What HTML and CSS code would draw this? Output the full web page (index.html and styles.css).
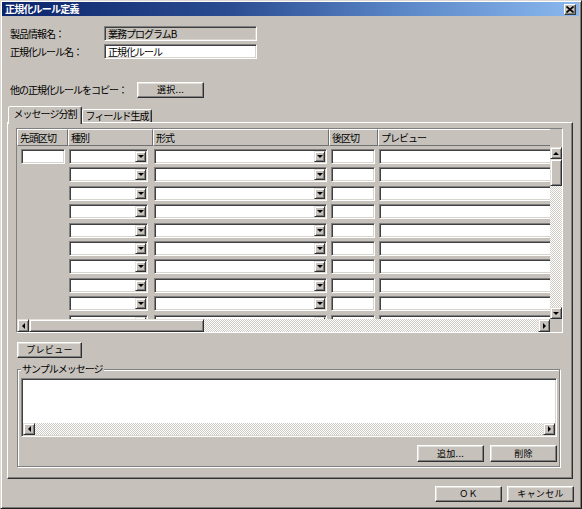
FILE: index.html
```html
<!DOCTYPE html>
<html lang="ja">
<head>
<meta charset="utf-8">
<title>正規化ルール定義</title>
<link rel="stylesheet" href="styles.css">
</head>
<body>
<div class="window">
  <div class="titlebar">
    <span class="title">正規化ルール定義</span>
    <span class="close-btn"><svg width="8" height="7" viewBox="0 0 8 7"><path d="M0.5 0.5 L7.5 6.5 M7.5 0.5 L0.5 6.5" stroke="#000" stroke-width="1.6" fill="none"/></svg></span>
  </div>

  <div class="form">
    <div class="field-row">
      <span class="label">製品情報名：</span>
      <div class="textbox readonly">業務プログラムB</div>
    </div>
    <div class="field-row row-gap">
      <span class="label">正規化ルール名：</span>
      <div class="textbox">正規化ルール</div>
    </div>
    <div class="copy-row">
      <span class="label copy-label">他の正規化ルールをコピー：</span>
      <div class="button btn-select">選択...</div>
    </div>
  </div>

  <div class="tabs">
    <div class="tab active">メッセージ分割</div>
    <div class="tab">フィールド生成</div>
  </div>

  <div class="panel">
    <div class="grid-table">
      <div class="grid-content">
        <div class="grid-header">
          <div class="hcell">先頭区切</div>
          <div class="hcell">種別</div>
          <div class="hcell">形式</div>
          <div class="hcell">後区切</div>
          <div class="hcell">プレビュー</div>
        </div>
        <div class="grid-body">
          <div class="grow">
            <div class="cell"><div class="input c1"></div></div>
            <div class="cell"><div class="combo c2"><span class="drop"><i class="arr-down"></i></span></div></div>
            <div class="cell"><div class="combo c3"><span class="drop"><i class="arr-down"></i></span></div></div>
            <div class="cell"><div class="input c4"></div></div>
            <div class="cell"><div class="input c5"></div></div>
          </div>
          <div class="grow">
            <div class="cell"></div>
            <div class="cell"><div class="combo c2"><span class="drop"><i class="arr-down"></i></span></div></div>
            <div class="cell"><div class="combo c3"><span class="drop"><i class="arr-down"></i></span></div></div>
            <div class="cell"><div class="input c4"></div></div>
            <div class="cell"><div class="input c5"></div></div>
          </div>
          <div class="grow">
            <div class="cell"></div>
            <div class="cell"><div class="combo c2"><span class="drop"><i class="arr-down"></i></span></div></div>
            <div class="cell"><div class="combo c3"><span class="drop"><i class="arr-down"></i></span></div></div>
            <div class="cell"><div class="input c4"></div></div>
            <div class="cell"><div class="input c5"></div></div>
          </div>
          <div class="grow">
            <div class="cell"></div>
            <div class="cell"><div class="combo c2"><span class="drop"><i class="arr-down"></i></span></div></div>
            <div class="cell"><div class="combo c3"><span class="drop"><i class="arr-down"></i></span></div></div>
            <div class="cell"><div class="input c4"></div></div>
            <div class="cell"><div class="input c5"></div></div>
          </div>
          <div class="grow">
            <div class="cell"></div>
            <div class="cell"><div class="combo c2"><span class="drop"><i class="arr-down"></i></span></div></div>
            <div class="cell"><div class="combo c3"><span class="drop"><i class="arr-down"></i></span></div></div>
            <div class="cell"><div class="input c4"></div></div>
            <div class="cell"><div class="input c5"></div></div>
          </div>
          <div class="grow">
            <div class="cell"></div>
            <div class="cell"><div class="combo c2"><span class="drop"><i class="arr-down"></i></span></div></div>
            <div class="cell"><div class="combo c3"><span class="drop"><i class="arr-down"></i></span></div></div>
            <div class="cell"><div class="input c4"></div></div>
            <div class="cell"><div class="input c5"></div></div>
          </div>
          <div class="grow">
            <div class="cell"></div>
            <div class="cell"><div class="combo c2"><span class="drop"><i class="arr-down"></i></span></div></div>
            <div class="cell"><div class="combo c3"><span class="drop"><i class="arr-down"></i></span></div></div>
            <div class="cell"><div class="input c4"></div></div>
            <div class="cell"><div class="input c5"></div></div>
          </div>
          <div class="grow">
            <div class="cell"></div>
            <div class="cell"><div class="combo c2"><span class="drop"><i class="arr-down"></i></span></div></div>
            <div class="cell"><div class="combo c3"><span class="drop"><i class="arr-down"></i></span></div></div>
            <div class="cell"><div class="input c4"></div></div>
            <div class="cell"><div class="input c5"></div></div>
          </div>
          <div class="grow">
            <div class="cell"></div>
            <div class="cell"><div class="combo c2"><span class="drop"><i class="arr-down"></i></span></div></div>
            <div class="cell"><div class="combo c3"><span class="drop"><i class="arr-down"></i></span></div></div>
            <div class="cell"><div class="input c4"></div></div>
            <div class="cell"><div class="input c5"></div></div>
          </div>
          <div class="grow">
            <div class="cell"></div>
            <div class="cell"><div class="combo c2"><span class="drop"><i class="arr-down"></i></span></div></div>
            <div class="cell"><div class="combo c3"><span class="drop"><i class="arr-down"></i></span></div></div>
            <div class="cell"><div class="input c4"></div></div>
            <div class="cell"><div class="input c5"></div></div>
          </div>
        </div>
      </div>
      <div class="vscroll">
        <span class="sbtn"><i class="arr-up"></i></span>
        <span class="vthumb"></span>
        <span class="track"></span>
        <span class="sbtn"><i class="arr-down"></i></span>
      </div>
      <div class="hscroll">
        <span class="sbtn"><i class="arr-left"></i></span>
        <span class="hthumb"></span>
        <span class="track"></span>
        <span class="sbtn"><i class="arr-right"></i></span>
      </div>
      <div class="corner"></div>
    </div>

    <div class="button btn-preview">プレビュー</div>

    <div class="groupbox">
      <span class="group-title">サンプルメッセージ</span>
      <div class="textarea">
        <div class="textarea-body"></div>
        <div class="hscroll small">
          <span class="sbtn"><i class="arr-left"></i></span>
          <span class="track"></span>
          <span class="sbtn"><i class="arr-right"></i></span>
        </div>
      </div>
      <div class="sample-buttons">
        <div class="button btn-std">追加...</div>
        <div class="button btn-std">削除</div>
      </div>
    </div>
  </div>

  <div class="dialog-buttons">
    <div class="button btn-std">ＯＫ</div>
    <div class="button btn-std">キャンセル</div>
  </div>
</div>
</body>
</html>
```

FILE: styles.css
```css
* { box-sizing: border-box; }

html, body {
  margin: 0;
  padding: 0;
  background: #c6c2bb;
}

body {
  font-family: "Noto Sans CJK JP", "Noto Sans", sans-serif;
  font-size: 10px;
  line-height: 12px;
  letter-spacing: -1px;
  color: #000;
}

.window {
  width: 582px;
  height: 509px;
  background: #c6c2bb;
  border: 1px solid;
  border-color: #dcd9d3 #1e1e1e #1e1e1e #dcd9d3;
  box-shadow: inset 1px 1px #ffffff, inset -1px -1px #7d7a74;
  padding: 1px 2px 1px 1px;
  display: flex;
  flex-direction: column;
}

/* ---------- title bar ---------- */
.titlebar {
  height: 14px;
  display: flex;
  align-items: center;
  justify-content: space-between;
  padding: 0 3px 0 3px;
  background: linear-gradient(90deg, #0a246a 0%, #2c4d92 40%, #5c88c8 70%, #8ab8ee 100%);
}

.title {
  color: #fff;
  font-weight: bold;
  font-size: 10px;
  line-height: 12px;
  letter-spacing: -0.8px;
}

.close-btn {
  width: 12px;
  height: 11px;
  display: flex;
  align-items: center;
  justify-content: center;
  background: #c6c2bb;
  border: 1px solid;
  border-color: #ffffff #3a3a3a #3a3a3a #ffffff;
  box-shadow: inset -1px -1px #808080;
}

/* ---------- top form ---------- */
.form {
  padding-left: 8px;
  padding-top: 10px;
}

.field-row {
  display: flex;
  align-items: center;
  height: 15px;
}

.row-gap { margin-top: 3px; }

.label {
  width: 94px;
  flex: none;
  white-space: nowrap;
}

.textbox {
  width: 153px;
  height: 15px;
  padding: 1px 0 0 3px;
  line-height: 12px;
  background: #fff;
  border: 1px solid;
  border-color: #808080 #ffffff #ffffff #808080;
  box-shadow: inset 1px 1px #404040, inset -1px -1px #d8d5cf;
  white-space: nowrap;
}

.textbox.readonly { background: #c6c2bb; }

.copy-row {
  display: flex;
  align-items: center;
  height: 16px;
  margin-top: 23px;
}

.copy-label { width: 127px; }

/* ---------- buttons ---------- */
.button {
  display: flex;
  align-items: center;
  justify-content: center;
  background: #c6c2bb;
  border: 1px solid;
  border-color: #ffffff #303030 #303030 #ffffff;
  box-shadow: inset -1px -1px #808080, inset 1px 1px #e4e1dc;
  white-space: nowrap;
  font-size: 9px;
  letter-spacing: 0.3px;
}

.btn-select { width: 67px; height: 16px; }
.btn-std { width: 67px; height: 17px; }

/* ---------- tabs ---------- */
.tabs {
  display: flex;
  align-items: flex-end;
  height: 16px;
  margin-top: 8px;
  margin-left: 6px;
}

.tab {
  width: 70px;
  height: 13px;
  display: flex;
  align-items: center;
  justify-content: center;
  background: #c6c2bb;
  border: 1px solid;
  border-bottom: none;
  border-color: #ffffff #303030 transparent #ffffff;
  box-shadow: inset -1px 0 #808080;
  border-radius: 2px 2px 0 0;
  white-space: nowrap;
}

.tab.active {
  width: 74px;
  height: 18px;
  margin-bottom: -2px;
  padding-bottom: 3px;
  position: relative;
  z-index: 1;
}

/* ---------- panel ---------- */
.panel {
  width: 566px;
  height: 357px;
  margin-left: 5px;
  padding: 5px 8px 0 8px;
  border: 1px solid;
  border-color: #ffffff #303030 #303030 #ffffff;
  box-shadow: inset -1px -1px #808080;
  flex: none;
}

/* ---------- grid table ---------- */
.grid-table {
  width: 547px;
  height: 205px;
  border: 1px solid;
  border-color: #808080 #ffffff #ffffff #808080;
  display: grid;
  grid-template-columns: 533px 12px;
  grid-template-rows: 190px 13px;
}

.grid-content {
  overflow: hidden;
}

.grid-header,
.grow {
  display: grid;
  grid-template-columns: 51px 85px 176px 49px 200px;
}

.grid-header { height: 17px; }

.hcell {
  height: 17px;
  padding: 2px 0 0 2px;
  border: 1px solid;
  border-color: #ffffff #707070 #707070 #ffffff;
  white-space: nowrap;
}

.grid-body { padding-top: 3px; }

.grow { height: 18.4px; }

.cell { height: 15px; }

.input,
.combo {
  height: 15px;
  background: #fff;
  border: 1px solid;
  border-color: #808080 #ffffff #ffffff #808080;
  box-shadow: inset 1px 1px #404040, inset -1px -1px #d8d5cf;
}

.c1 { margin-left: 4px; width: 44px; }
.c2 { margin-left: 1px; width: 79px; }
.c3 { margin-left: 1px; width: 173px; }
.c4 { margin-left: 2px; width: 44px; }
.c5 { margin-left: 1px; width: 250px; }

.combo {
  display: flex;
  justify-content: flex-end;
  padding: 1px;
}

.drop,
.sbtn {
  display: flex;
  align-items: center;
  justify-content: center;
  background: #c6c2bb;
  border: 1px solid;
  border-color: #e4e1dc #303030 #303030 #e4e1dc;
  box-shadow: inset 1px 1px #ffffff, inset -1px -1px #808080;
  flex: none;
}

.drop { width: 11px; height: 11px; }

.arr-down, .arr-up, .arr-left, .arr-right {
  display: block;
  width: 0;
  height: 0;
}

.arr-down {
  border-left: 3px solid transparent;
  border-right: 3px solid transparent;
  border-top: 3px solid #000;
}

.arr-up {
  border-left: 3px solid transparent;
  border-right: 3px solid transparent;
  border-bottom: 3px solid #000;
}

.arr-left {
  border-top: 3px solid transparent;
  border-bottom: 3px solid transparent;
  border-right: 3px solid #000;
}

.arr-right {
  border-top: 3px solid transparent;
  border-bottom: 3px solid transparent;
  border-left: 3px solid #000;
}

.track {
  flex: 1;
  background: repeating-conic-gradient(#ffffff 0 25%, #cfccc6 0 50%) 0 0 / 2px 2px;
}

.vscroll {
  display: flex;
  flex-direction: column;
  padding-top: 18px;
}

.vscroll .sbtn { height: 12px; width: 12px; }

.vthumb,
.hthumb {
  background: #c6c2bb;
  border: 1px solid;
  border-color: #e4e1dc #303030 #303030 #e4e1dc;
  box-shadow: inset 1px 1px #ffffff, inset -1px -1px #808080;
  flex: none;
}

.vthumb { height: 27px; }

.hscroll {
  display: flex;
  height: 13px;
}

.hscroll .sbtn { width: 12px; height: 13px; }

.hthumb { width: 175px; }

.corner { background: #c6c2bb; }

/* ---------- preview button ---------- */
.btn-preview {
  width: 65px;
  height: 16px;
  margin-top: 9px;
  margin-left: 1px;
}

/* ---------- group box ---------- */
.groupbox {
  width: 543px;
  height: 98px;
  margin-top: 11px;
  margin-left: 1px;
  padding: 0 2px 0 3px;
  border: 1px solid #808080;
  box-shadow: inset 1px 1px #ffffff, 1px 1px #ffffff;
}

.group-title {
  display: block;
  width: fit-content;
  margin-top: -7px;
  padding: 0 1px;
  line-height: 12px;
  height: 12px;
  background: #c6c2bb;
  white-space: nowrap;
}

.textarea {
  width: 536px;
  height: 59px;
  margin-top: 3px;
  border: 1px solid;
  border-color: #808080 #ffffff #ffffff #808080;
  box-shadow: inset 1px 1px #404040, inset -1px -1px #d8d5cf;
  padding: 1px;
  display: flex;
  flex-direction: column;
}

.textarea-body {
  flex: 1;
  background: #fff;
}

.hscroll.small { height: 12px; flex: none; }
.hscroll.small .sbtn { width: 12px; height: 12px; }

.sample-buttons {
  display: flex;
  justify-content: flex-end;
  gap: 6px;
  margin-top: 8px;
}

/* ---------- dialog buttons ---------- */
.dialog-buttons {
  display: flex;
  justify-content: flex-end;
  gap: 5px;
  margin-top: 7px;
  padding-right: 5px;
}

.dialog-buttons .btn-std { height: 16px; }
```
